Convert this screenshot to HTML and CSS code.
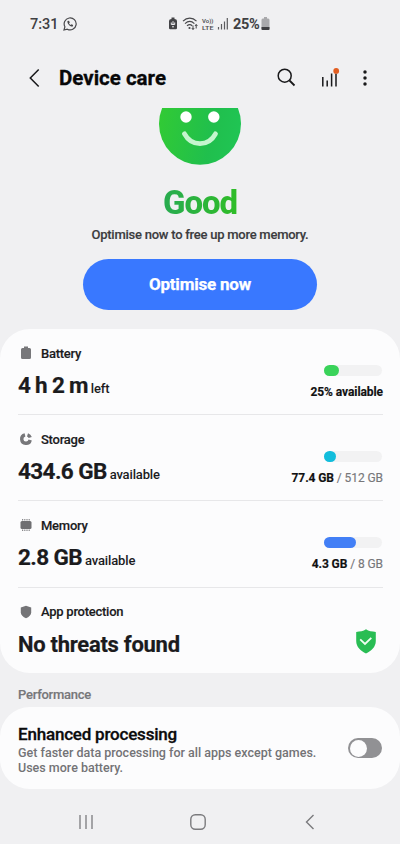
FILE: index.html
```html
<!DOCTYPE html>
<html lang="en">
<head>
<meta charset="utf-8">
<title>Device care</title>
<link rel="stylesheet" href="styles.css">
</head>
<body>
<header class="status">
  <span class="time">7:31</span>
  <svg class="chat" width="14" height="14" viewBox="0 0 14 14"><path d="M1 13l.9-3.2A6 6 0 1 1 4.3 12.200z" fill="none" stroke="#47474a" stroke-width="1.200"/><path d="M4.500 4c-.8 2.400 2.900 6.300 5.300 5.500l.3-1.500-1.600-.8-.8.8C6.800 7.600 6.300 7 6 6.200l.8-.8L6 3.700z" fill="#47474a"/></svg>
  <svg class="signals" width="60" height="16" viewBox="0 0 60 16">
    <path d="M3.500 3V1.500h3V3Q9 3 9 5v7q0 1.200-1.200 1.200H2.200Q1 13.200 1 12V5q0-2 2.500-2z" fill="#434346"/>
    <path d="M5 5.200v3M3.300 6.500v2h3.400v-2M4 10.800h2" fill="none" stroke="#ededf0" stroke-width="1"/>
    <path d="M15 5.200c4-4 9.500-4 13.500 0M17 7.600c3-2.700 6.500-2.700 9.400 0M19 9.800c2-1.600 3.600-1.600 5.200 0" fill="none" stroke="#48484b" stroke-width="1.200"/>
    <circle cx="21.500" cy="12" r="1.100" fill="#48484b"/>
    <path d="M25 9.500v4M23.800 12l1.200 1.500 1.200-1.500M28.200 12.500v-4M27 10l1.200-1.500 1.200 1.500" fill="none" stroke="#48484b"/>
    <text x="34" y="6.500" class="volte" textLength="11.500" lengthAdjust="spacingAndGlyphs">Vo))</text>
    <text x="34" y="14" class="volte" textLength="11.500" lengthAdjust="spacingAndGlyphs">LTE</text>
    <path d="M50.500 11v2.500M53.500 8v5.500M56.500 5.500v8M59.300 2v11.500" stroke="#5b5b5e" stroke-width="1.200"/>
  </svg>
  <span class="percent">25%</span>
  <svg class="level" width="9" height="13" viewBox="0 0 9 13"><path d="M3 1.500V0h3v1.500h1.200q1.300 0 1.300 1.500v9q0 1-1 1h-6q-1 0-1-1V3q0-1.500 1.300-1.500z" fill="#a9a9ac"/><path d="M.5 10h8v2q0 1-1 1h-6q-1 0-1-1z" fill="#3f3f42"/></svg>
</header>
<nav class="appbar">
  <svg class="back" width="12" height="20" viewBox="0 0 12 20"><path d="M9.700 1.500L1.300 10l8.400 8.500" fill="none" stroke="#18181a" stroke-width="1.500"/></svg>
  <h1>Device care</h1>
  <svg class="search" width="19" height="19" viewBox="0 0 19 19"><circle cx="7.700" cy="7.700" r="6.500" fill="none" stroke="#19191b" stroke-width="1.500"/><path d="M12.500 12.500l5 5" stroke="#19191b" stroke-width="1.800"/></svg>
  <svg class="stats" width="20" height="20" viewBox="0 0 20 20"><path d="M1.800 9v9.500M6.200 12.500v6M10.600 5.500v13M15 5.500v13" stroke="#19191b" stroke-width="1.500"/><circle cx="15.200" cy="2.900" r="2.900" fill="#e25e21"/></svg>
  <svg class="more" width="4" height="16" viewBox="0 0 4 16"><g fill="#19191b"><circle cx="2" cy="2" r="1.750"/><circle cx="2" cy="8" r="1.750"/><circle cx="2" cy="14" r="1.750"/></g></svg>
</nav>
<section class="hero">
  <svg class="face" width="82" height="57" viewBox="0 0 82 57">
    <defs><linearGradient id="green" x1="0" x2="1" y1=".45" y2=".65"><stop stop-color="#31ca35"/><stop offset=".65" stop-color="#20bf4d"/><stop offset="1" stop-color="#20c554"/></linearGradient></defs>
    <circle cx="41" cy="15.800" r="41" fill="url(#green)"/>
    <circle cx="27" cy="9" r="5.700" fill="#fff"/><circle cx="54.800" cy="9" r="5.700" fill="#fff"/>
    <path d="M25.500 25.800c7 13 24 13 31 0" fill="none" stroke="#c5f5ce" stroke-width="4.800" stroke-linecap="round"/>
  </svg>
  <h2>Good</h2>
  <p>Optimise now to free up more memory.</p>
  <button>Optimise now</button>
</section>
<main class="card">
  <section class="row">
    <div>
      <h3><svg width="16" height="16" viewBox="0 0 16 16"><path d="M6 3V1.500h4V3h1.500Q13 3 13 4.500v8q0 1.500-1.500 1.500h-7Q3 14 3 12.500v-8Q3 3 4.500 3z" fill="#77777a"/></svg><span>Battery</span></h3>
      <p class="value"><b class="time-left">4 h 2 m</b><span>left</span></p>
    </div>
    <div class="usage"><div class="bar"><i class="battery"></i></div><p><b>25% available</b></p></div>
  </section>
  <section class="row">
    <div>
      <h3><svg width="16" height="16" viewBox="0 0 16 16"><path d="M7 3.800A4.300 4.300 0 1 0 12.200 9M9.500 3.800A4.300 4.300 0 0 1 12.200 6.500" fill="none" stroke="#77777a" stroke-width="3.400"/></svg><span>Storage</span></h3>
      <p class="value"><b class="storage-left">434.6 GB</b><span>available</span></p>
    </div>
    <div class="usage"><div class="bar"><i class="storage"></i></div><p><b>77.4 GB</b> / 512 GB</p></div>
  </section>
  <section class="row">
    <div>
      <h3><svg width="16" height="16" viewBox="0 0 16 16"><rect x="2.500" y="4" width="11" height="8" rx="1.500" fill="#6f6f72"/><path d="M4 2.800h8.500M4 13.200h8.500" stroke="#88888b" stroke-width="1.500" stroke-dasharray="1.200 1"/></svg><span>Memory</span></h3>
      <p class="value"><b class="memory-left">2.8 GB</b><span>available</span></p>
    </div>
    <div class="usage"><div class="bar"><i class="memory"></i></div><p><b>4.3 GB</b> / 8 GB</p></div>
  </section>
  <section class="row">
    <div>
      <h3 class="protection"><svg width="16" height="16" viewBox="0 0 16 16"><path d="M8 1.800l5.200 1.700v4.700c0 2.700-2.200 4.700-5.200 6-3-1.300-5.200-3.300-5.200-6V3.500z" fill="#747477"/></svg><span>App protection</span></h3>
      <p class="value"><b class="threats">No threats found</b></p>
    </div>
    <svg class="safe" width="20" height="25" viewBox="0 0 20 25"><path d="M10 .3c2.500 1.800 6.200 2.400 9.800 2.600v9.200c0 6-4.500 9.800-9.800 12.500C4.700 21.900.2 18.100.2 12.100V2.900C3.800 2.700 7.500 2.100 10 .3z" fill="#29bd54"/><path d="M4.200 10.300L9 14.900l6.300-6.100" fill="none" stroke="#effff2" stroke-width="1.800"/></svg>
  </section>
</main>
<h4>Performance</h4>
<section class="card enhanced">
  <div><h5>Enhanced processing</h5><p>Get faster data processing for all apps except games.<br><span>Uses more battery.</span></p></div>
  <div class="toggle"></div>
</section>
<footer>
  <svg width="16" height="16" viewBox="0 0 16 16"><path d="M2 1v14M8 1v14M14 1v14" stroke="#7a7a7d" stroke-width="1.300"/></svg>
  <svg width="16" height="16" viewBox="0 0 16 16"><rect x=".8" y=".8" width="14.400" height="14.400" rx="4.500" fill="none" stroke="#7a7a7d" stroke-width="1.400"/></svg>
  <svg width="10" height="16" viewBox="0 0 10 16"><path d="M8.500 1L1.500 8l7 7" fill="none" stroke="#7a7a7d" stroke-width="1.400"/></svg>
</footer>
</body>
</html>
```
FILE: styles.css
```css
* { box-sizing: border-box; }
body { margin: 0; width: 400px; height: 844px; overflow: hidden; background: #f0f0f2; color: #1b1b1d; font-family: Roboto, sans-serif; }
h1, h2, h3, h4, h5, p { margin: 0; }
svg { display: block; flex: none; }
.status { height: 47px; display: flex; align-items: center; padding-left: 30px; color: #404043; }
.time { width: 33px; padding-top: 1px; font-size: 14.500px; font-weight: 500; }
.signals { margin-left: 91px; }
.volte { font-size: 6px; font-weight: 600; fill: #505053; }
.percent { width: 28px; margin-left: 5px; padding-top: 1px; font-size: 14.500px; font-weight: 700; letter-spacing: -.3px; }
.appbar { height: 61px; display: flex; align-items: center; padding-left: 29px; }
h1 { width: 203px; margin-left: 18px; font-size: 20.500px; line-height: 24px; font-weight: 700; color: #080809; -webkit-text-stroke: .3px; }
.search { margin-left: 15px; }
.stats { margin-left: 25px; }
.more { margin-left: 22px; }
.hero { height: 221px; display: flex; flex-direction: column; align-items: center; }
h2 { margin-top: 19px; font-size: 33px; line-height: 38px; font-weight: 800; letter-spacing: -1.100px; background: linear-gradient(90deg, #28ab50, #2fbd28); background-clip: text; color: transparent; }
.hero p { margin-top: 4px; font-size: 13px; line-height: 18px; font-weight: 500; letter-spacing: -.25px; color: #3c3c3f; -webkit-text-stroke: .15px; }
button { width: 234px; height: 51px; margin-top: 14.500px; padding-bottom: 2px; border: 0; border-radius: 26px; background: #3978ff; color: #fff; font: 700 17px Roboto, sans-serif; letter-spacing: -.2px; -webkit-text-stroke: .25px; }
.card { background: #fcfcfd; border-radius: 30px; }
main.card { height: 344px; padding: 0 17px 0 18px; }
.row { height: 86.200px; display: flex; justify-content: space-between; border-bottom: 1.500px solid #e7e7e9; }
.row:last-child { border: 0; }
h3 { display: flex; align-items: center; gap: 7px; height: 16px; margin-top: 16px; font-size: 13px; font-weight: 500; letter-spacing: -.25px; -webkit-text-stroke: .15px; }
.value { display: flex; align-items: baseline; gap: 3px; margin-top: 10px; line-height: 28px; font-size: 13px; font-weight: 500; letter-spacing: -.15px; white-space: nowrap; }
.value b { font-size: 22.500px; font-weight: 700; letter-spacing: -.6px; -webkit-text-stroke: .2px; }
.value .time-left { letter-spacing: -.7px; }
.value .threats { font-size: 22px; line-height: 29px; letter-spacing: -.28px; }
.usage { display: flex; flex-direction: column; align-items: flex-end; padding-top: 36px; }
.bar { width: 58px; height: 11px; margin-right: 1px; border-radius: 6px; background: #f2f2f3; }
.bar i { display: block; height: 11px; border-radius: 6px; }
.battery { width: 15px; background: #3ad35a; }
.storage { width: 12px; background: #12bddc; }
.memory { width: 32px; background: #427ff6; }
.usage p { margin-top: 7px; font-size: 12px; line-height: 18px; letter-spacing: -.08px; color: #77777a; -webkit-text-stroke: .15px; }
.usage b { color: #111112; font-weight: 700; }
.safe { margin: 41px 7px 0 0; }
h4 { height: 34px; padding: 13px 0 0 18px; font-size: 13px; line-height: 17px; font-weight: 500; letter-spacing: -.25px; color: #77777a; -webkit-text-stroke: .15px; }
.enhanced { height: 82px; display: flex; justify-content: space-between; align-items: center; padding: 0 18px; }
h5 { font-size: 17px; line-height: 20px; font-weight: 500; letter-spacing: -.2px; color: #0b0b0c; -webkit-text-stroke: .3px; }
.enhanced > div:first-child { padding-top: 2px; }
.enhanced p { margin-top: 1px; font-size: 12.500px; line-height: 15px; font-weight: 500; color: #737376; white-space: nowrap; }
.toggle { width: 34px; height: 20px; padding: 1.500px; border-radius: 10px; background: #919194; }
.toggle::before { content: ""; display: block; width: 17px; height: 17px; border-radius: 50%; background: #fcfcfd; }
footer { height: 55px; display: flex; align-items: center; padding: 10px 85px 0 78px; }
footer svg:nth-child(2) { margin-left: 96px; }
footer svg:nth-child(3) { margin-left: 99px; }
```
